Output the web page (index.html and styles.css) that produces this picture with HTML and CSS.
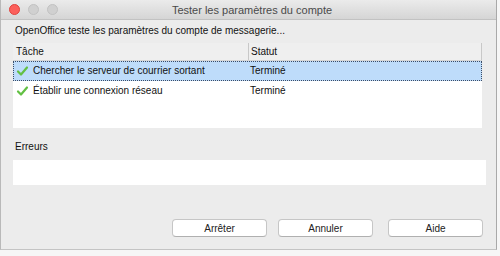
FILE: index.html
```html
<!DOCTYPE html>
<html lang="fr">
<head>
  <meta charset="UTF-8">
  <title>Tester les paramètres du compte</title>
  <link rel="stylesheet" href="styles.css">
</head>
<body>
  <!-- Fenêtre de dialogue -->
  <div class="window">
    <div class="titlebar">
      <div class="lights">
        <span class="light red"></span>
        <span class="light"></span>
        <span class="light"></span>
      </div>
      <div class="title">Tester les paramètres du compte</div>
    </div>

    <div class="content">
      <p class="intro">OpenOffice teste les paramètres du compte de messagerie...</p>

      <!-- Liste des tâches -->
      <div class="tasks">
        <div class="row head">
          <div class="col-task">Tâche</div>
          <div class="col-status">Statut</div>
        </div>
        <div class="row selected">
          <div class="col-task">
            <svg class="check" viewBox="0 0 12 12"><path d="M1.5 6.5 L4.5 9.5 L10.5 2.5"/></svg>
            Chercher le serveur de courrier sortant
          </div>
          <div class="col-status">Terminé</div>
        </div>
        <div class="row">
          <div class="col-task">
            <svg class="check" viewBox="0 0 12 12"><path d="M1.5 6.5 L4.5 9.5 L10.5 2.5"/></svg>
            Établir une connexion réseau
          </div>
          <div class="col-status">Terminé</div>
        </div>
      </div>

      <p class="label">Erreurs</p>
      <div class="errors"></div>

      <div class="buttons">
        <button class="btn">Arrêter</button>
        <button class="btn narrow">Annuler</button>
        <button class="btn help">Aide</button>
      </div>
    </div>
  </div>
</body>
</html>
```

FILE: styles.css
```css
/* Page */
body {
  margin: 0;
  width: 500px;
  height: 256px;
  background: #f6f6f6;
  font-family: 'Liberation Sans', Arial, sans-serif;
  font-size: 10px;
  color: #111;
  overflow: hidden;
}

/* Fenêtre */
.window {
  width: 495px;
  height: 249px;
  background: #ececec;
  border-left: 1px solid #b9b9b9;
  border-right: 1px solid #a9a9a9;
  border-bottom: 1px solid #c4c4c4;
  display: flex;
  flex-direction: column;
}

.titlebar {
  height: 19px;
  background: linear-gradient(#ebebeb, #d5d5d5);
  border-bottom: 1px solid #c2c2c2;
  display: flex;
  align-items: center;
}

.lights {
  display: flex;
  gap: 8px;
  padding-left: 8px;
}

.light {
  width: 11px;
  height: 11px;
  border-radius: 50%;
  background: #d0d0d0;
  border: 1px solid #c2c2c2;
  box-sizing: border-box;
}

.light.red {
  background: #fc605c;
  border-color: #e0443e;
}

.title {
  flex: 1;
  text-align: center;
  font-size: 11px;
  color: #4a4a4a;
  margin-right: 50px;
}

/* Contenu */
.content {
  flex: 1;
  padding: 0 10px 0 12px;
  display: flex;
  flex-direction: column;
}

.intro {
  margin: 3px 0 0 2px;
  height: 16px;
  line-height: 16px;
}

/* Tableau des tâches */
.tasks {
  margin-top: 4px;
  width: 469px;
  height: 85px;
  background: #fff;
}

.row {
  display: flex;
  height: 20px;
  line-height: 20px;
}

.row.head {
  height: 17px;
  line-height: 17px;
  background: #efefef;
  border-bottom: 1px solid #d6d6d6;
}

.head .col-task,
.head .col-status {
  border-right: 1px solid #c8c8c8;
}

.col-task {
  width: 232px;
  padding-left: 3px;
  display: flex;
  align-items: center;
  gap: 4px;
}

.col-status {
  flex: 1;
  padding-left: 2px;
}

.row.selected {
  background: #bedcfa;
  outline: 1px dotted #3b4c66;
  outline-offset: -1px;
}

.check {
  width: 13px;
  height: 12px;
  fill: none;
  stroke: #62c043;
  stroke-width: 2.2;
  stroke-linecap: round;
  stroke-linejoin: round;
}

/* Erreurs */
.label {
  margin: 11px 0 0 2px;
  height: 16px;
  line-height: 16px;
}

.errors {
  margin-top: 5px;
  width: 473px;
  height: 25px;
  background: #fff;
}

/* Boutons */
.buttons {
  margin-top: 34px;
  display: flex;
  padding-left: 159px;
}

.btn {
  width: 95px;
  height: 18px;
  padding: 0;
  font-family: inherit;
  font-size: 10px;
  color: #222;
  background: #fff;
  border: 1px solid #c6c6c6;
  border-bottom-color: #b0b0b0;
  border-radius: 4px;
}

.btn.narrow {
  margin-left: 11px;
}

.btn.help {
  margin-left: 15px;
}
```
